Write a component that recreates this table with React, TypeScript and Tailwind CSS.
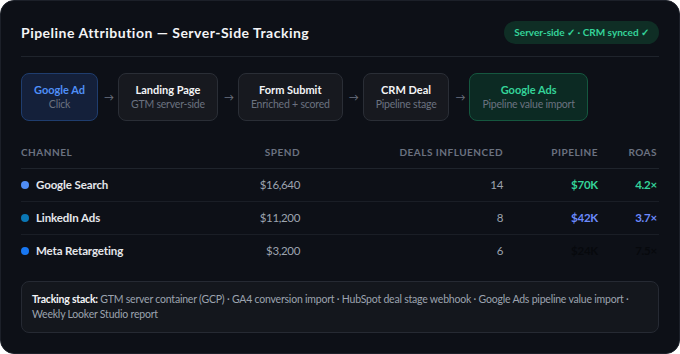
import React from "react";

type Step = { title: string; sub: string; tone: "blue" | "green" | "plain" };

const steps: Step[] = [
  { title: "Google Ad", sub: "Click", tone: "blue" },
  { title: "Landing Page", sub: "GTM server-side", tone: "plain" },
  { title: "Form Submit", sub: "Enriched + scored", tone: "plain" },
  { title: "CRM Deal", sub: "Pipeline stage", tone: "plain" },
  { title: "Google Ads", sub: "Pipeline value import", tone: "green" },
];

const toneBox = {
  blue: "bg-[#14203a] border-[#1f3d6e]",
  green: "bg-[#0c2a23] border-[#15573f]",
  plain: "bg-[#17191f] border-[#2a2e36]",
};

const toneTitle = {
  blue: "text-[#4f8ff7]",
  green: "text-[#34d399]",
  plain: "text-[#f3f4f6]",
};

const rows = [
  { channel: "Google Search", dot: "bg-[#4f8df5]", spend: "$16,640", deals: 14, pipeline: "$70K", roas: "4.2×", color: "text-[#34d399]" },
  { channel: "LinkedIn Ads", dot: "bg-[#0a77b5]", spend: "$11,200", deals: 8, pipeline: "$42K", roas: "3.7×", color: "text-[#6b8afd]" },
  { channel: "Meta Retargeting", dot: "bg-[#1877f2]", spend: "$3,200", deals: 6, pipeline: "$24K", roas: "7.5×", color: "text-[#07090d]" },
];

const cols = "grid grid-cols-[180px_99px_203px_95px_1fr]";

export default function App() {
  return (
    <div className="bg-white w-[680px] h-[354px]" style={{ fontFamily: 'Lato, "Noto Sans", sans-serif' }}>
      <div className="w-full h-full rounded-[14px] bg-[#0d1017] border border-[#1c2029] px-5 pt-5">
        {/* Header */}
        <div className="flex items-center justify-between pb-3 border-b border-[#1f242c]">
          <h1 className="text-[14px] font-bold tracking-[0.035em] text-[#f3f4f6] leading-[23px]">
            Pipeline Attribution — Server-Side Tracking
          </h1>
          <span className="rounded-full bg-[#0f2e25] text-[#34d399] text-[10px] font-bold px-2.5 leading-[23px]">
            Server-side ✓ · CRM synced ✓
          </span>
        </div>

        {/* Flow */}
        <div className="flex items-center gap-1.5 mt-4">
          {steps.map((s, i) => (
            <React.Fragment key={s.title}>
              {i > 0 && <span className="text-[10px] text-[#6b7280] w-2 text-center">→</span>}
              <div className={`rounded-lg border px-3 py-2 text-center leading-[15px] ${toneBox[s.tone]}`}>
                <div className={`text-[11px] font-bold ${toneTitle[s.tone]}`}>{s.title}</div>
                <div className="text-[10.5px] tracking-[-0.02em] text-[#6b7280]">{s.sub}</div>
              </div>
            </React.Fragment>
          ))}
        </div>

        {/* Table */}
        <div className="mt-5">
          <div className={`${cols} border-b border-[#1f242c] pt-1 pb-2 text-[10px] leading-[15px] font-bold tracking-[0.05em] text-[#6b7280] uppercase`}>
            <div>Channel</div>
            <div className="text-right">Spend</div>
            <div className="text-right">Deals Influenced</div>
            <div className="text-right">Pipeline</div>
            <div className="text-right pr-0.5">ROAS</div>
          </div>
          {rows.map((r, i) => (
            <div
              key={r.channel}
              className={`${cols} py-2 text-[11.5px] leading-[16px] ${i < rows.length - 1 ? "border-b border-[#1a1e26]" : ""}`}
            >
              <div className="flex items-center gap-[7px]">
                <span className={`w-2 h-2 rounded-full ${r.dot}`} />
                <span className="text-[#e5e7eb] font-bold tracking-[-0.01em]">{r.channel}</span>
              </div>
              <div className="text-right text-[#9ca3af] tracking-[-0.03em]">{r.spend}</div>
              <div className="text-right text-[#9ca3af] tracking-[-0.03em]">{r.deals}</div>
              <div className={`text-right font-bold tracking-[-0.02em] ${r.color}`}>{r.pipeline}</div>
              <div className={`text-right font-bold tracking-[-0.02em] pr-0.5 ${r.color}`}>{r.roas}</div>
            </div>
          ))}
        </div>

        {/* Footer */}
        <div className="mt-[14px] rounded-lg border border-[#262a33] bg-[#14171d] px-[10px] py-[10px] text-[10.5px] tracking-[-0.02em] leading-[15px] text-[#9ca3af]">
          <span className="font-bold text-[#f3f4f6]">Tracking stack:</span> GTM server container (GCP) · GA4 conversion import · HubSpot deal stage webhook · Google Ads pipeline value import · Weekly Looker Studio report
        </div>
      </div>
    </div>
  );
}
